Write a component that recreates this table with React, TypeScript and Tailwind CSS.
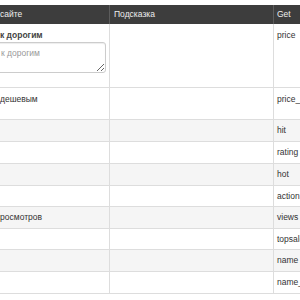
const rows = [
  { name: '', get: 'hit', h: 'h-[22px]' },
  { name: '', get: 'rating', h: 'h-[22px]' },
  { name: '', get: 'hot', h: 'h-[22px]' },
  { name: '', get: 'action', h: 'h-[21px]' },
  { name: 'просмотров', get: 'views', h: 'h-[22px]' },
  { name: '', get: 'topsale', h: 'h-[21px]' },
  { name: '', get: 'name', h: 'h-[22px]' },
  { name: '', get: 'name_', h: 'h-[22px]' },
]

export default function App() {
  return (
    <div className="w-[300px] h-[300px] overflow-hidden bg-white pt-[5px] font-['Liberation_Sans',Arial,sans-serif] text-[8.5px] text-[#333]">
      <div className="w-[340px]">
        {/* header */}
        <div className="grid grid-cols-[110px_164px_1fr] h-[19px] bg-[#3d3d3d] text-[#eee]">
          <div className="border-r border-[#5c5c5c] flex items-center">сайте</div>
          <div className="border-r border-[#5c5c5c] flex items-center pl-[4px]">Подсказка</div>
          <div className="flex items-center pl-[3px]">Get</div>
        </div>

        {/* first row with textarea */}
        <div className="grid grid-cols-[110px_164px_1fr] h-[64px] border-b border-[#ddd]">
          <div className="border-r border-[#ddd] pt-[5px] pr-[4px]">
            <div className="font-bold leading-[12px] text-[#444]">к дорогим</div>
            <textarea
              placeholder="к дорогим"
              className="block -ml-[4px] w-[110px] h-[31px] mt-[1px] px-[4px] py-[4px] border border-[#ccc] rounded-[3px] shadow-[inset_0_1px_1px_rgba(0,0,0,0.075)] text-[8.5px] leading-[12px] placeholder:text-[#999]"
            />
          </div>
          <div className="border-r border-[#ddd]" />
          <div className="pt-[5px] pl-[3px] leading-[12px]">price</div>
        </div>

        <div className="grid grid-cols-[110px_164px_1fr] h-[32px] border-b border-[#ddd]">
          <div className="border-r border-[#ddd] pt-[5px] leading-[12px]">дешевым</div>
          <div className="border-r border-[#ddd]" />
          <div className="pt-[5px] pl-[3px] leading-[12px]">price_</div>
        </div>

        {rows.map((r, i) => (
          <div
            key={r.get}
            className={`grid grid-cols-[110px_164px_1fr] ${r.h} border-b border-[#ddd] ${i % 2 === 0 ? 'bg-[#f5f5f5]' : 'bg-white'}`}
          >
            <div className="border-r border-[#ddd] flex items-center overflow-hidden">
              <span className="-ml-[4.5px] whitespace-nowrap">{r.name}</span>
            </div>
            <div className="border-r border-[#ddd]" />
            <div className="flex items-center pl-[3px]">{r.get}</div>
          </div>
        ))}
      </div>
    </div>
  )
}
